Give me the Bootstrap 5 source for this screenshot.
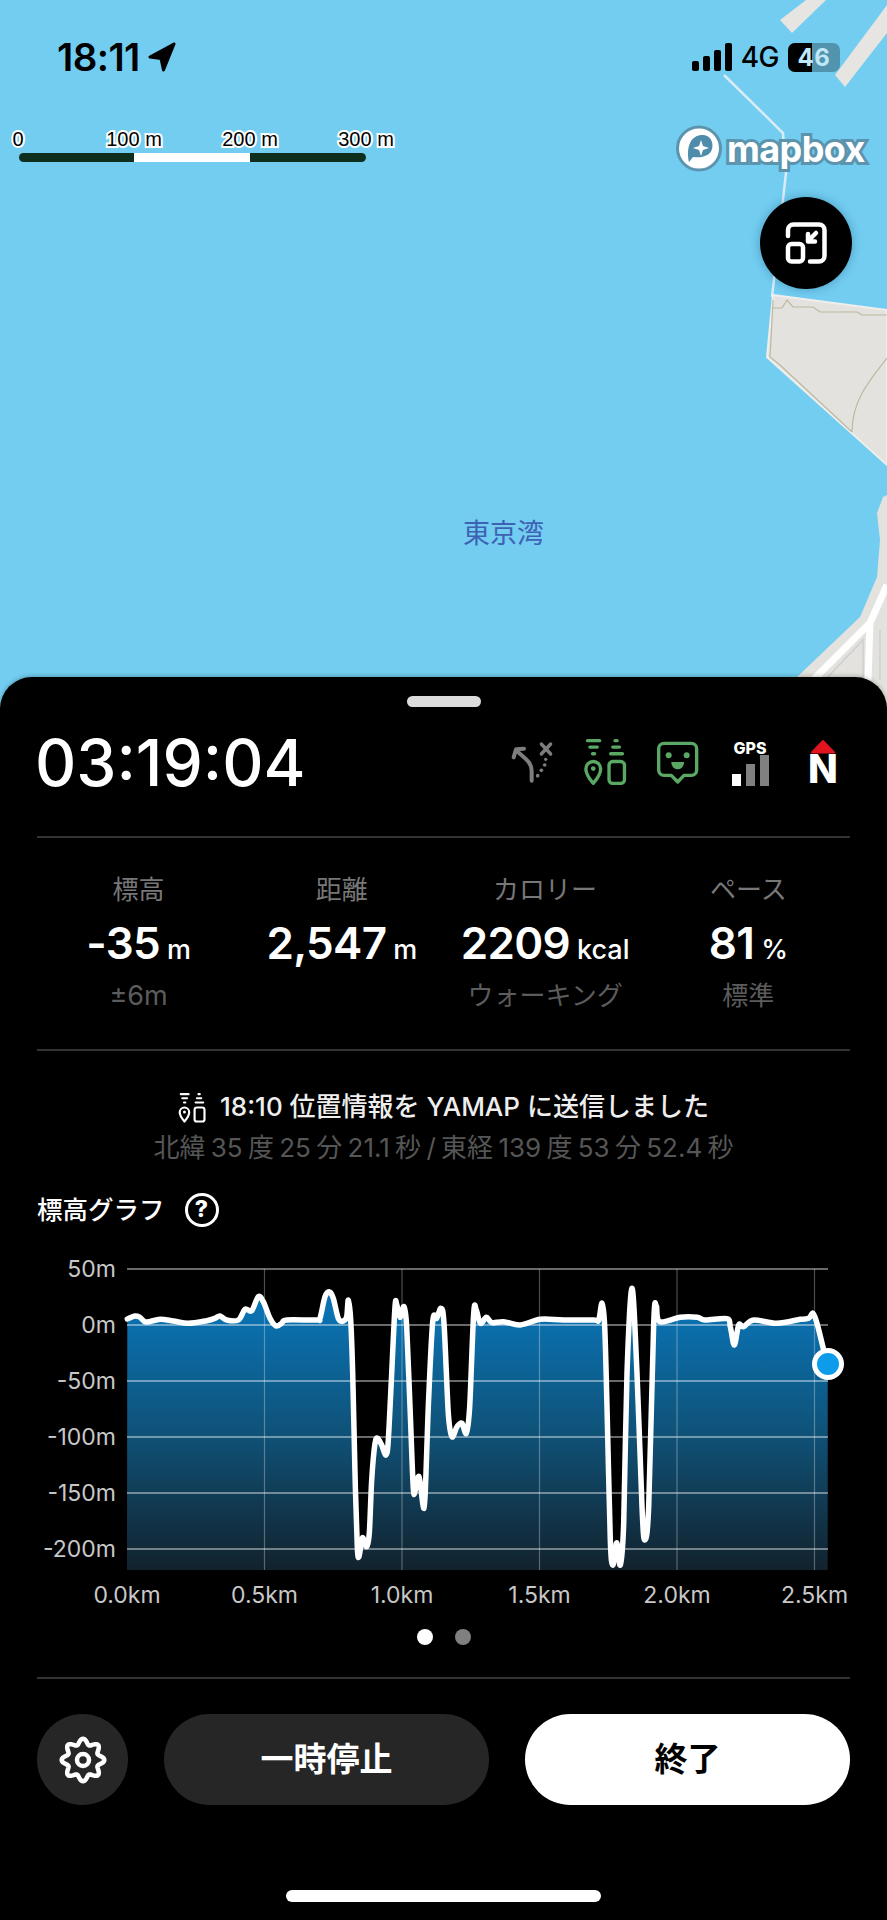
<!doctype html>
<html lang="ja">
<head>
<meta charset="utf-8">
<title>YAMAP</title>
<link href="https://cdn.jsdelivr.net/npm/bootstrap@5.3.0/dist/css/bootstrap.min.css" rel="stylesheet">
<style>
html,body{background:#000;margin:0}
body{font-family:Inter,"Noto Sans CJK JP",sans-serif;color:#fff;width:887px}
.map-area{height:707px;background:#72cdf1;overflow:hidden}
.map-art{position:absolute;left:0;top:0}
.status-row{padding:39px 47px 0 57px;color:#000}
.status-time{font-size:38.500px;font-weight:600;line-height:36px;letter-spacing:-.6px}
.status-net{font-size:28px;font-weight:500;line-height:36px;letter-spacing:-.5px;margin-right:1px}
.batt-box{width:52px;height:29px;border-radius:7px;overflow:hidden;background:rgba(0,0,0,.28);color:#bfe7f8;font-size:24px;font-weight:700;line-height:29px;text-align:center}
.batt-fill{position:absolute;left:0;top:0;width:24px;height:100%;background:#000}
.batt-num{position:relative;letter-spacing:.5px}
.scale-box{position:absolute;left:0;top:128px;width:400px;height:36px}
.scale-lab{position:absolute;top:0;transform:translateX(-50%);font-family:"Liberation Sans",sans-serif;font-size:20px;line-height:22px;color:#000;-webkit-text-stroke:4px #fff;paint-order:stroke fill;white-space:nowrap}
.scale-bar{position:absolute;left:19px;top:25px;width:347px;height:9px;border-radius:5px;background:#0e2f1e;overflow:hidden}
.scale-white{position:absolute;left:115px;width:116px;height:100%;background:#fff}
.mb-logo{position:absolute;left:676px;top:125px;height:47px}
.mb-text{font-size:36px;font-weight:700;line-height:44px;color:#fff;-webkit-text-stroke:6px #5c94ae;paint-order:stroke fill;letter-spacing:-.6px;margin-left:5px}
.map-btn{position:absolute;left:760px;top:197px;width:92px;height:92px;background:#000;box-shadow:0 0 10px rgba(0,60,90,.35)}
.bay-name{position:absolute;left:463px;top:517px;width:81px;font-size:27px;line-height:34px;color:#3d62b4;white-space:nowrap}
.sheet{margin-top:-30px;position:relative;height:1243px;background:#000;border-radius:32px 32px 0 0;box-shadow:0 -1px 4px rgba(0,0,0,.25);padding-top:19px}
.grabber{width:74px;height:11px;border-radius:6px;background:#dcdcdc;margin:0 auto}
.pad-x{padding-left:37px;padding-right:37px}
.top-line{height:129px}
.timer-text{font-size:64px;font-weight:500;line-height:70px;margin:21px 0 0 -2px}
.hair{height:2px;background:#333;margin:0 37px}
.ic-abs{position:absolute}
.gps-t{position:absolute;left:0;top:-1px;width:38px;text-align:center;font-size:16px;font-weight:800;line-height:18px;color:#fff}
.north-t{position:absolute;left:0;top:10px;width:30px;text-align:center;font-size:39px;font-weight:800;line-height:40px;color:#fff}
.stat-grid{padding-top:36px;height:211px}
.stat-lab{font-size:26px;line-height:32px;color:#777;text-align:center}
.stat-val{font-size:44px;font-weight:600;line-height:52px;margin-top:11px;text-align:center;white-space:nowrap;letter-spacing:-.7px}
.stat-unit{font-size:27px;font-weight:500;margin-left:7px;letter-spacing:0}
.stat-sub{font-size:26px;line-height:32px;color:#5c5c5c;margin-top:4px;text-align:center;min-height:32px}
.sub-latin{font-size:27px}
.send-line{margin-top:40px;font-size:26px;line-height:32px;color:#eee;font-weight:500;white-space:nowrap;gap:14px}
.coord-line{margin-top:9px;font-size:26px;line-height:32px;color:#565656;white-space:nowrap;text-align:center;word-spacing:-2px}
.graph-head{margin-top:28px;height:36px}
.graph-title{font-size:25.500px;line-height:36px;font-weight:500}
.help-ring{width:34px;height:34px;border:3.500px solid #fff;border-radius:50%;font-size:23px;font-weight:800;line-height:27px;text-align:center;margin-left:20px}
.chart-svg{display:block;margin-top:22px}
.ax{font-size:23px;fill:#c8c8c8;font-family:Inter,sans-serif}
.pager{margin-top:19px;height:16px;gap:22px}
.pg-dot{width:16px;height:16px;border-radius:50%;background:#fff}
.pg-off{background:#808080}
.hair-b{margin-top:32px}
.act-row{margin-top:35px;height:91px}
.gear-btn{width:91px;height:91px;background:#262626;border:0;padding:0;flex:none}
.pill-btn{height:91px;border:0;border-radius:46px;font-size:33px;font-weight:700;line-height:1;padding:0}
.pill-dark{width:325px;margin-left:36px;background:#262626;color:#fff}
.pill-light{width:325px;margin-left:36px;background:#fff;color:#000}
.home-bar{width:315px;height:12px;border-radius:6px;background:#fff;margin:85px auto 0 286px}
</style>
</head>
<body>
<svg width="0" height="0" class="position-absolute">
  <symbol id="ic-send" viewBox="310 175 130 140">
    <g fill="currentColor">
      <rect x="318" y="178" width="46" height="10" rx="5"/><rect x="325" y="197" width="32" height="10" rx="5"/><rect x="333" y="217" width="16" height="10" rx="5"/>
      <rect x="400" y="178" width="16" height="10" rx="5"/><rect x="393" y="197" width="30" height="10" rx="5"/><rect x="387" y="217" width="45" height="10" rx="5"/>
      <circle cx="340" cy="266" r="7"/>
    </g>
    <path d="M340 310C328 296 318 282 318 267a22 22 0 0 1 44 0C362 282 352 296 340 310Z" fill="none" stroke="currentColor" stroke-width="10" stroke-linejoin="round"/>
    <rect x="387" y="245" width="46" height="65" rx="11" fill="none" stroke="currentColor" stroke-width="10"/>
  </symbol>
</svg>

<section class="map-area position-relative">
  <svg class="map-art" width="887" height="707" viewBox="0 0 887 707">
    <path d="M806 0H826L792 33 780 20Z" fill="#e6e5e1"/>
    <path d="M835 75L887 5V33L845 87Z" fill="#e6e5e1"/>
    <path d="M724 75L783 133 786 173 772 297" fill="none" stroke="#d9ecf6" stroke-width="2.500"/>
    <path d="M773 295L887 310V465L767 357Z" fill="#e3e2de" stroke="#eeeeec" stroke-width="2"/>
    <path d="M773 308H782L787 300 793 307H813L820 312H857L862 315H887M773 300L772 320 770 357 780 365 852 432M852 432C852 400 870 380 887 358" fill="none" stroke="#bdb8a0" stroke-width="1.200"/>
    <path d="M797 707V677L860 617 877 577 880 540 877 513 883 497 887 495V707Z" fill="#e3e2de"/>
    <path d="M813 680L870 623 887 585M868 680L870 623" fill="none" stroke="#fff" stroke-width="7"/>
    <path d="M825 680L863 640V680M880 630V680" fill="none" stroke="#cfcfcf" stroke-width="1.500"/>
  </svg>

  <div class="status-row d-flex justify-content-between position-relative">
    <div class="d-flex align-items-center">
      <span class="status-time">18:11</span>
      <svg class="ms-2" width="28" height="30" viewBox="0 0 28 30"><path d="M26 2L2 15 13 16.500 15.500 28Z" fill="#000" stroke="#000" stroke-width="3" stroke-linejoin="round"/></svg>
    </div>
    <div class="d-flex align-items-center">
      <svg width="41" height="28" viewBox="0 0 41 28"><g fill="#000"><rect x="0" y="18" width="7" height="10" rx="2"/><rect x="11" y="13" width="7" height="15" rx="2"/><rect x="22" y="7" width="7" height="21" rx="2"/><rect x="33" y="0" width="7" height="28" rx="2"/></g></svg>
      <span class="status-net ms-2">4G</span>
      <div class="batt-box position-relative ms-2"><span class="batt-fill"></span><span class="batt-num">46</span></div>
    </div>
  </div>

  <div class="scale-box">
    <span class="scale-lab" style="left:18px">0</span>
    <span class="scale-lab" style="left:134px">100 m</span>
    <span class="scale-lab" style="left:250px">200 m</span>
    <span class="scale-lab" style="left:366px">300 m</span>
    <div class="scale-bar"><div class="scale-white"></div></div>
  </div>

  <div class="mb-logo d-flex align-items-center">
    <svg width="46" height="47" viewBox="0 0 46 47">
      <circle cx="23" cy="23.500" r="21.500" fill="#fff" stroke="#5c94ae" stroke-width="3"/>
      <path d="M13 37C11 28 11 12 25 10 34 9 38 17 36 24 34 32 23 33 17 32Z" fill="#4f8cab"/>
      <path d="M25 15L27 21 33 23 27 25 25 31 23 25 17 23 23 21Z" fill="#fff"/>
    </svg>
    <span class="mb-text">mapbox</span>
  </div>

  <button class="map-btn rounded-circle d-flex align-items-center justify-content-center border-0 p-0" aria-label="expand">
    <svg width="42" height="42" viewBox="0 0 42 42" fill="none" stroke="#fff" stroke-width="4.500" stroke-linecap="round" stroke-linejoin="round">
      <path d="M3 14V8A5.500 5.500 0 0 1 8.500 2.500H34A5.500 5.500 0 0 1 39.500 8V34A5.500 5.500 0 0 1 34 39.500H25"/>
      <rect x="3" y="22" width="15" height="17.500" rx="3.500"/>
      <path d="M31 11L23 19M23 12V19.500H30"/>
    </svg>
  </button>

  <div class="bay-name">東京湾</div>
</section>

<section class="sheet">
  <div class="grabber"></div>

  <div class="pad-x top-line position-relative">
    <div class="timer-text position-absolute">03:19:04</div>
    <svg class="ic-abs" style="left:510px;top:33px" width="46" height="46" viewBox="90 180 138 138" fill="none" stroke="#7d7d7d" stroke-linecap="round" stroke-linejoin="round">
      <path d="M155 302V272C155 245 130 232 110 212" stroke-width="12"/>
      <path d="M101 232L108 208 132 206" stroke-width="12"/>
      <path d="M184 192L212 222M212 192L184 222" stroke-width="10"/>
      <g fill="#7d7d7d" stroke="none"><circle cx="197" cy="238" r="5"/><circle cx="194" cy="255" r="5.500"/><circle cx="184" cy="271" r="5.500"/><circle cx="173" cy="287" r="5.500"/></g>
    </svg>
    <svg class="ic-abs" style="left:583px;top:31px;color:#5aa864" width="44" height="47"><use href="#ic-send"/></svg>
    <svg class="ic-abs" style="left:655px;top:33px" width="46" height="46" viewBox="525 180 138 138">
      <path d="M552 190H634A16 16 0 0 1 650 206V270A16 16 0 0 1 634 286H612L593 306 574 286H552A16 16 0 0 1 536 270V206A16 16 0 0 1 552 190Z" fill="none" stroke="#5aa864" stroke-width="10" stroke-linejoin="round"/>
      <circle cx="566" cy="226" r="9" fill="#5aa864"/><circle cx="620" cy="226" r="9" fill="#5aa864"/>
      <path d="M574 246H612C612 260 603 268 593 268S574 260 574 246Z" fill="#5aa864"/>
    </svg>
    <div class="ic-abs" style="left:731px;top:33px;width:38px;height:46px">
      <span class="gps-t">GPS</span>
      <svg class="ic-abs" style="left:0;top:15px" width="38" height="31" viewBox="0 0 38 31"><rect x="1" y="19" width="9" height="12" fill="#fff"/><rect x="15" y="9" width="9" height="22" fill="#808080"/><rect x="29" y="0" width="9" height="31" fill="#808080"/></svg>
    </div>
    <div class="ic-abs" style="left:808px;top:32px;width:30px;height:46px">
      <svg class="ic-abs" style="left:2px;top:0" width="26" height="15" viewBox="0 0 26 15"><path d="M2 13.500L13 2 24 13.500Z" fill="#e2141f" stroke="#e2141f" stroke-width="2" stroke-linejoin="round"/></svg>
      <span class="north-t">N</span>
    </div>
  </div>

  <div class="hair"></div>

  <div class="row g-0 pad-x stat-grid">
    <div class="col-3"><div class="stat-lab">標高</div><div class="stat-val">-35<span class="stat-unit">m</span></div><div class="stat-sub sub-latin">±6m</div></div>
    <div class="col-3"><div class="stat-lab">距離</div><div class="stat-val">2,547<span class="stat-unit">m</span></div><div class="stat-sub"></div></div>
    <div class="col-3"><div class="stat-lab">カロリー</div><div class="stat-val">2209<span class="stat-unit">kcal</span></div><div class="stat-sub">ウォーキング</div></div>
    <div class="col-3"><div class="stat-lab">ペース</div><div class="stat-val">81<span class="stat-unit">%</span></div><div class="stat-sub">標準</div></div>
  </div>

  <div class="hair"></div>

  <div class="send-line d-flex justify-content-center align-items-center">
    <svg width="28" height="31" style="color:#fff"><use href="#ic-send"/></svg>
    <span>18:10 位置情報を YAMAP に送信しました</span>
  </div>
  <div class="coord-line">北緯 35 度 25 分 21.1 秒 / 東経 139 度 53 分 52.4 秒</div>

  <div class="graph-head pad-x d-flex align-items-center">
    <span class="graph-title">標高グラフ</span>
    <span class="help-ring">?</span>
  </div>

  <svg class="chart-svg" width="887" height="360" viewBox="0 1250 887 360">
    <defs>
      <linearGradient id="elev" x1="0" y1="1265" x2="0" y2="1570" gradientUnits="userSpaceOnUse">
        <stop offset=".15" stop-color="#0a72b2"/><stop offset=".55" stop-color="#0f5278"/><stop offset="1" stop-color="#12222d"/>
      </linearGradient>
    </defs>
    <path id="elev-area" fill="url(#elev)"/>
    <g stroke="#fff" stroke-opacity=".55" stroke-width="1.500">
      <path d="M127 1269H828M127 1325H828M127 1381H828M127 1437H828M127 1493H828M127 1549H828"/>
    </g>
    <g stroke="#fff" stroke-opacity=".3" stroke-width="1.200">
      <path d="M264.500 1269V1570M402 1269V1570M539.500 1269V1570M677 1269V1570M814.500 1269V1570"/>
    </g>
    <path id="elev-line" fill="none" stroke="#fff" stroke-width="5.500" stroke-linejoin="round" stroke-linecap="round"/>
    <circle cx="828" cy="1364" r="13.500" fill="#0c9ceb" stroke="#fff" stroke-width="5"/>
    <g class="ax" text-anchor="end">
      <text x="116" y="1277">50m</text><text x="116" y="1333">0m</text><text x="116" y="1389">-50m</text><text x="116" y="1445">-100m</text><text x="116" y="1501">-150m</text><text x="116" y="1557">-200m</text>
    </g>
    <g class="ax" text-anchor="middle">
      <text x="127" y="1603">0.0km</text><text x="264.500" y="1603">0.5km</text><text x="402" y="1603">1.0km</text><text x="539.500" y="1603">1.5km</text><text x="677" y="1603">2.0km</text><text x="814.500" y="1603">2.5km</text>
    </g>
  </svg>

  <div class="pager d-flex justify-content-center"><span class="pg-dot"></span><span class="pg-dot pg-off"></span></div>
  <div class="hair hair-b"></div>

  <div class="act-row pad-x d-flex">
    <button class="gear-btn rounded-circle d-flex align-items-center justify-content-center" aria-label="settings">
      <svg width="50" height="50" viewBox="-25 -25 50 50" fill="none" stroke="#fff" stroke-width="4.500"><path id="gear-path" stroke-linejoin="round"/><circle r="6"/></svg>
    </button>
    <button class="pill-btn pill-dark">一時停止</button>
    <button class="pill-btn pill-light">終了</button>
  </div>

  <div class="home-bar"></div>
</section>

<script src="https://cdn.jsdelivr.net/npm/bootstrap@5.3.0/dist/js/bootstrap.bundle.min.js"></script>
<script>
(function(){
  var a=[[322,237],[345,228],[360,232],[378,246],[420,238],[460,243],[505,250],[560,242],[585,235],[600,228],[620,240],[655,240],[675,208],[695,212],[715,170],[730,185],[750,235],[768,258],[785,250],[800,240],[890,240],[900,235],[915,170],[928,155],[940,175],[955,235],[970,243],[980,230],[985,180],[992,240],[998,400],[1005,700],[1012,920],[1017,950],[1025,900],[1030,895],[1040,920],[1048,880],[1055,720],[1065,610],[1073,595],[1085,615],[1098,645],[1105,600],[1115,400],[1125,200],[1130,193],[1140,232],[1152,200],[1160,260],[1170,500],[1180,745],[1187,745],[1195,710],[1200,725],[1212,805],[1218,700],[1225,500],[1238,245],[1250,235],[1263,205],[1272,250],[1285,520],[1296,590]];
  var b=[[30,560],[45,550],[58,580],[68,500],[80,220],[88,210],[100,250],[118,232],[135,248],[170,245],[220,255],[280,238],[350,240],[440,240],[455,240],[465,190],[473,260],[480,500],[490,900],[497,975],[505,930],[510,910],[520,975],[530,850],[540,400],[555,145],[570,400],[585,800],[593,900],[605,800],[620,250],[628,198],[638,245],[700,232],[750,232],[775,240],[840,236],[850,260],[862,315],[875,255],[890,260],[920,240],[990,250],[1060,238],[1085,235],[1098,220],[1110,250],[1130,330],[1142,373]];
  var p=a.map(function(q){return [20+q[0]/3,1240+q[1]/3]}).concat(b.map(function(q){return [447+q[0]/3,1240+q[1]/3]}));
  var d='M'+p[0][0].toFixed(1)+' '+p[0][1].toFixed(1);
  for(var i=0;i<p.length-1;i++){
    var p0=p[i-1]||p[i],p1=p[i],p2=p[i+1],p3=p[i+2]||p2,t=.16;
    d+='C'+(p1[0]+(p2[0]-p0[0])*t).toFixed(1)+' '+(p1[1]+(p2[1]-p0[1])*t).toFixed(1)+' '+(p2[0]-(p3[0]-p1[0])*t).toFixed(1)+' '+(p2[1]-(p3[1]-p1[1])*t).toFixed(1)+' '+p2[0].toFixed(1)+' '+p2[1].toFixed(1);
  }
  document.getElementById('elev-line').setAttribute('d',d);
  document.getElementById('elev-area').setAttribute('d',d+'V1570H127Z');
  var g='';
  for(var k=0;k<=160;k++){
    var th=k/160*Math.PI*2,r=18.500+2.800*Math.cos(8*th);
    g+=(k?'L':'M')+(r*Math.sin(th)).toFixed(2)+' '+(-r*Math.cos(th)).toFixed(2);
  }
  document.getElementById('gear-path').setAttribute('d',g+'Z');
})();
</script>
</body>
</html>
